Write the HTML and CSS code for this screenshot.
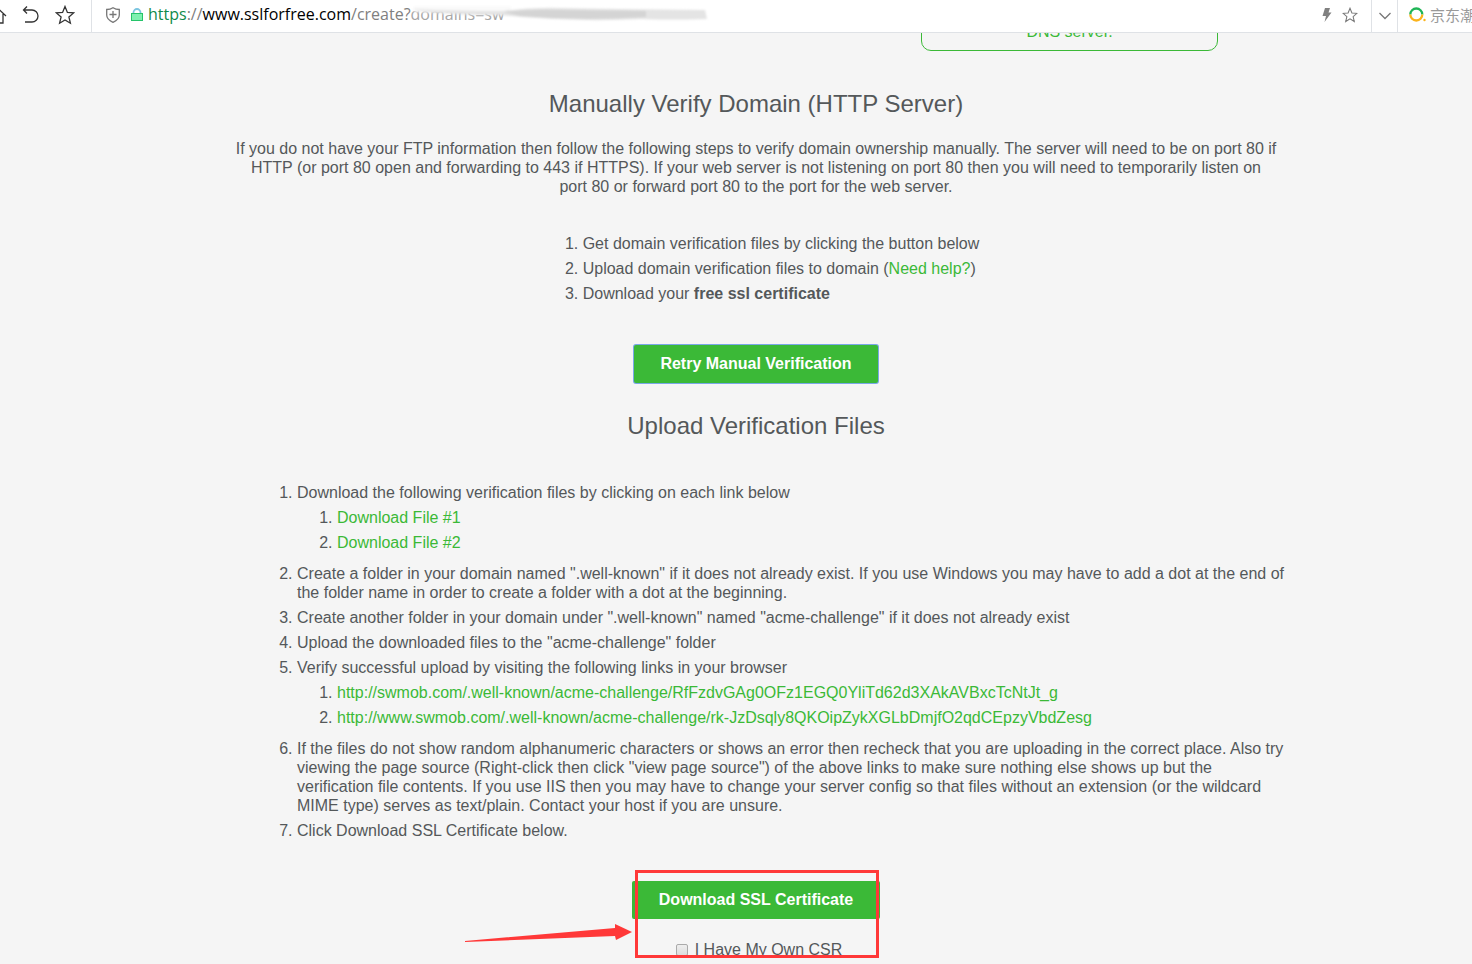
FILE: index.html
```
<!DOCTYPE html>
<html lang="en">
<head>
  <meta charset="UTF-8" />
  <meta name="viewport" content="width=device-width, initial-scale=1" />
  <title>SSL For Free - Manual Verification</title>
  <link rel="stylesheet" href="styles.css">
</head>
<body>

  <header class="toolbar">
    <nav class="nav-buttons">
      <button type="button" class="home" aria-label="Home">
        <svg width="20" height="20" viewBox="0 0 20 20"><path d="M1 11 L10 2.500 L19 11 M4 9 V18 H8 V12 H12 V18 H16 V9" /></svg>
      </button>
      <button type="button" aria-label="Back">
        <svg width="18" height="18" viewBox="0 0 18 18"><path d="M5 0.500 L1.500 4 L5 7.500 M1.500 4 H10 A6 6 0 0 1 10 16 H3" /></svg>
      </button>
      <button type="button" aria-label="Favorites">
        <svg width="20" height="20" viewBox="0 0 20 20"><path d="M10 1.500 L12.400 7.400 L18.600 7.900 L13.900 12 L15.400 18.200 L10 14.900 L4.600 18.200 L6.100 12 L1.400 7.900 L7.600 7.400 Z" /></svg>
      </button>
    </nav>
    <div class="address">
      <svg class="shield" width="14" height="16" viewBox="0 0 14 16"><path d="M7 0.700 C5 2 3 2.500 0.700 2.500 V8 C0.700 12 4 14 7 15.300 C10 14 13.300 12 13.300 8 V2.500 C11 2.500 9 2 7 0.700 Z M7 4 V11 M3.500 7.500 H10.500" /></svg>
      <svg class="lock" width="12" height="14" viewBox="0 0 12 14">
        <path d="M2.500 6 V4.500 A3.500 3.500 0 0 1 9.500 4.500 V6" fill="none" stroke="#7cc5e0" stroke-width="1.800" />
        <rect x="0.500" y="5.500" width="11" height="7" fill="#7ef0b0" stroke="#25c46a" />
      </svg>
      <div class="url"><span class="scheme">https</span>://<span class="host">www.sslforfree.com</span>/create?<span class="query">domains=sw<svg class="smudge" width="298" height="18" viewBox="0 0 298 18">
        <path d="M3 0 H100 V8 Q50 9 3 6 Z" fill="#fafafa" />
        <path d="M0 3 Q50 5 92 5 Q120 1 150 2 Q200 3 294 4 L296 13 Q260 14 230 13 Q170 16 110 11 L88 9 Q30 9 0 3 Z" fill="#e4e4e4" />
        <path d="M92 6 Q120 3 150 4 L235 5 L235 11 Q170 15 110 10 Z" fill="#d4d4d4" />
      </svg></span></div>
      <button type="button" aria-label="Speed mode">
        <svg width="10" height="14" viewBox="0 0 10 14"><path class="bolt" d="M3 0 H8 L6.500 4.500 H9.500 L2.500 14 L4 8 H0.500 Z" /></svg>
      </button>
      <button type="button" aria-label="Bookmark this page">
        <svg class="gray" width="16" height="16" viewBox="0 0 20 20"><path d="M10 1.500 L12.400 7.400 L18.600 7.900 L13.900 12 L15.400 18.200 L10 14.900 L4.600 18.200 L6.100 12 L1.400 7.900 L7.600 7.400 Z" /></svg>
      </button>
    </div>
    <button type="button" class="expand" aria-label="More">
      <svg class="gray" width="12" height="8" viewBox="0 0 12 8"><path d="M0.500 1 L6 6.500 L11.500 1" /></svg>
    </button>
    <div class="search">
      <svg width="17" height="16" viewBox="0 0 17 16">
        <path d="M1.300 7.500 A6 6 0 1 1 13.300 7.500" fill="none" stroke="#1fb556" stroke-width="2.300" />
        <path d="M1.300 7.500 A6 6 0 0 0 13.300 7.500" fill="none" stroke="#fbb31c" stroke-width="2.300" />
        <circle cx="15.500" cy="13" r="1.200" fill="#fbb31c" />
      </svg>
      <input type="text" placeholder="京东潮流" aria-label="Search">
    </div>
  </header>

  <div class="page">
    <main class="content">
      <div class="methods">
        <div class="method">DNS server.</div>
      </div>

      <h2>Manually Verify Domain (HTTP Server)</h2>
      <p class="intro">
        If you do not have your FTP information then follow the following steps to verify domain ownership manually. The server will need to be on port 80 if<br>
        HTTP (or port 80 open and forwarding to 443 if HTTPS). If your web server is not listening on port 80 then you will need to temporarily listen on<br>
        port 80 or forward port 80 to the port for the web server.
      </p>

      <ol class="summary">
        <li>Get domain verification files by clicking the button below</li>
        <li>Upload domain verification files to domain (<a href="#">Need help?</a>)</li>
        <li>Download your <b>free ssl certificate</b></li>
      </ol>

      <button type="button" class="btn retry">Retry Manual Verification</button>

      <h2>Upload Verification Files</h2>

      <ol class="steps">
        <li>Download the following verification files by clicking on each link below
          <ol>
            <li><a href="#">Download File #1</a></li>
            <li><a href="#">Download File #2</a></li>
          </ol>
        </li>
        <li>Create a folder in your domain named ".well-known" if it does not already exist. If you use Windows you may have to add a dot at the end of<br>
          the folder name in order to create a folder with a dot at the beginning.</li>
        <li>Create another folder in your domain under ".well-known" named "acme-challenge" if it does not already exist</li>
        <li>Upload the downloaded files to the "acme-challenge" folder</li>
        <li>Verify successful upload by visiting the following links in your browser
          <ol>
            <li><a href="#">http://swmob.com/.well-known/acme-challenge/RfFzdvGAg0OFz1EGQ0YliTd62d3XAkAVBxcTcNtJt_g</a></li>
            <li><a href="#">http://www.swmob.com/.well-known/acme-challenge/rk-JzDsqly8QKOipZykXGLbDmjfO2qdCEpzyVbdZesg</a></li>
          </ol>
        </li>
        <li>If the files do not show random alphanumeric characters or shows an error then recheck that you are uploading in the correct place. Also try<br>
          viewing the page source (Right-click then click "view page source") of the above links to make sure nothing else shows up but the<br>
          verification file contents. If you use IIS then you may have to change your server config so that files without an extension (or the wildcard<br>
          MIME type) serves as text/plain. Contact your host if you are unsure.</li>
        <li>Click Download SSL Certificate below.</li>
      </ol>

      <div class="download">
        <button type="button" class="btn">Download SSL Certificate</button>
        <label class="csr"><input type="checkbox"> I Have My Own CSR</label>
        <div class="highlight"></div>
        <svg class="arrow" width="168" height="18" viewBox="0 0 168 18"><path d="M1 17 L151 4 L151 0 L168 8 L152 16 L151 12 L1 18 Z" /></svg>
      </div>
    </main>
  </div>

</body>
</html>
```
FILE: styles.css
```
* {
  box-sizing: border-box;
}
body {
  margin: 0;
  height: 100vh;
  display: flex;
  flex-direction: column;
  overflow: hidden;
  background: #f5f5f5;
  color: #54585a;
  font-family: "Liberation Sans", Arial, sans-serif;
  font-size: 16px;
  line-height: 19px;
}
a {
  color: #3bb937;
  text-decoration: none;
}

/* browser bar */
.toolbar {
  display: flex;
  flex: none;
  height: 33px;
  background: #fff;
  border-bottom: 1px solid #dfe2e6;
}
.toolbar button {
  display: flex;
  align-items: center;
  padding: 0;
  border: 0;
  background: none;
}
.toolbar svg {
  flex: none;
  display: block;
}
.toolbar button path,
.shield path {
  fill: none;
  stroke: #333;
  stroke-width: 1.3;
}
.toolbar .gray path,
.shield path {
  stroke: #777;
}
.toolbar .bolt {
  fill: #808080;
  stroke: none;
}
.nav-buttons {
  display: flex;
  align-items: center;
  gap: 15px;
  width: 92px;
  padding-bottom: 3px;
  border-right: 1px solid #dfe2e6;
}
.nav-buttons .home {
  margin-left: -13px;
}
.address {
  display: flex;
  flex: 1;
  align-items: center;
  padding: 0 13px 3px 14px;
}
.shield {
  margin-right: 11px;
}
.lock {
  margin-right: 5px;
}
.url {
  flex: 1;
  color: #808080;
  font-family: "Open Sans", "Noto Sans", sans-serif;
  font-size: 16px;
  white-space: nowrap;
}
.scheme {
  color: #0f8a4b;
}
.host {
  color: #000;
}
.query {
  position: relative;
  color: #a5a5a5;
}
/* blurred out part of the address */
.smudge {
  position: absolute;
  left: 0;
  top: 3px;
  filter: blur(1px);
}
.address button + button {
  margin-left: 10px;
}
.toolbar .expand {
  justify-content: center;
  width: 27px;
  border-left: 1px solid #dfe2e6;
  border-right: 1px solid #dfe2e6;
}
.search {
  display: flex;
  align-items: center;
  gap: 4px;
  width: 74px;
  padding: 0 0 3px 11px;
}
.search input {
  flex: 1;
  min-width: 0;
  padding: 0;
  border: 0;
  font-family: "Noto Sans CJK SC", sans-serif;
  font-size: 15px;
}
.search input::placeholder {
  color: #999;
}

/* page */
.page {
  flex: 1;
  overflow: hidden;
  padding-left: 40px;
}
.content {
  display: flex;
  flex-direction: column;
  align-items: center;
  max-width: 1060px;
  margin: 0 auto;
}
.methods {
  display: flex;
  justify-content: flex-end;
  width: 100%;
  padding-right: 68px;
}
/* last method box, scrolled under the browser bar */
.method {
  width: 297px;
  margin-top: -21px;
  padding: 9px;
  border: 1px solid #3bb937;
  border-radius: 10px;
  color: #3bb937;
  text-align: center;
}
h2 {
  margin: 39px 0 21px;
  font-size: 24px;
  font-weight: normal;
  line-height: 28px;
}
.intro {
  margin: 0;
  text-align: center;
}
ol {
  margin: 0;
  padding-left: 40px;
}
li {
  margin-bottom: 6px;
}
li ol {
  margin: 6px 0 12px;
}
.summary {
  margin: 38px 0 36px;
  padding-left: 50px;
}
.steps {
  width: 100%;
  margin: 22px 0 35px;
  padding-left: 71px;
}
.btn {
  height: 38px;
  padding: 0 27px;
  border: 0;
  border-radius: 2px;
  background: #3bb937;
  color: #fff;
  font: bold 16px "Liberation Sans", Arial, sans-serif;
}
.retry {
  padding: 0 26px;
  box-shadow: 0 0 0 1px #7aa7e8;
}
.retry + h2 {
  margin-top: 29px;
}
.download {
  position: relative;
  display: flex;
  flex-direction: column;
  align-items: center;
}
.csr {
  display: flex;
  align-items: center;
  gap: 7px;
  margin-top: 21px;
  padding-left: 6px;
}
.csr input {
  appearance: none;
  width: 12px;
  height: 12px;
  margin: 0;
  border: 1px solid #aaa;
  border-radius: 2px;
  background: linear-gradient(#eee, #ddd);
}
.highlight {
  position: absolute;
  top: -11px;
  left: 3px;
  right: 1px;
  height: 88px;
  border: 3px solid #ff3838;
  pointer-events: none;
}
.arrow {
  position: absolute;
  top: 43px;
  right: 100%;
  fill: #ff3838;
}
```
